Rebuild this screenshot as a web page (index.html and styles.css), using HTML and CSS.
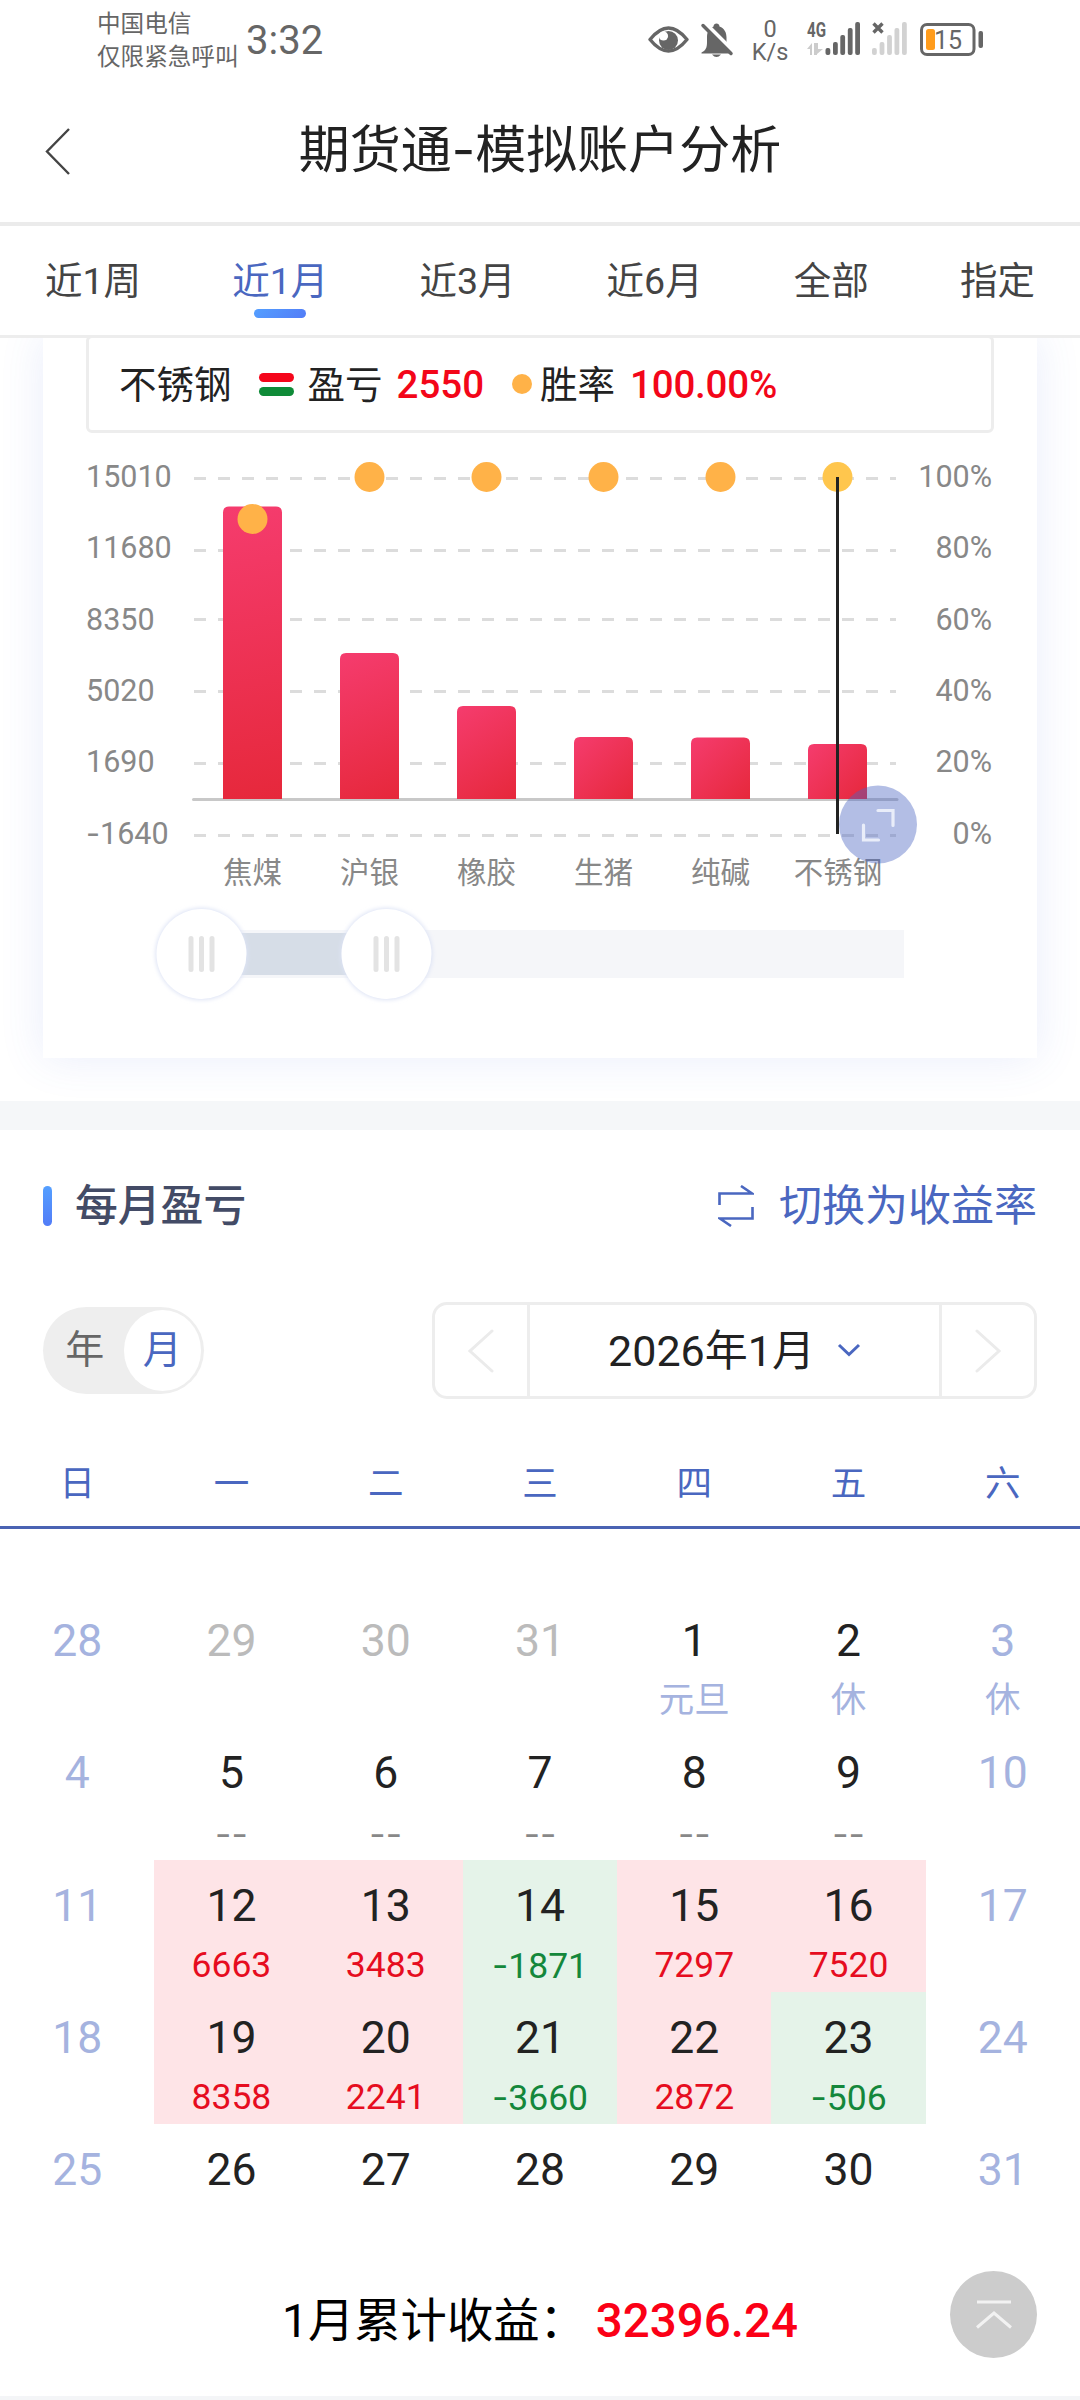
FILE: index.html
```html
<!DOCTYPE html>
<html lang="zh-CN">
<head>
    <meta charset="UTF-8">
    <meta name="viewport" content="width=device-width, initial-scale=1.0">
    <title>期货通-模拟账户分析</title>
    <link rel="stylesheet" href="styles.css">
</head>
<body>

    <!-- status bar -->
    <div class="status-bar">
        <div class="carrier">
            <div>中国电信</div>
            <div>仅限紧急呼叫</div>
        </div>
        <div class="clock">3:32</div>
        <svg class="status-icons" width="340" height="80" viewBox="648 0 340 80">
            <path d="M650 39.5Q668.500 16.500 687 39.500Q668.500 62.500 650 39.500Z" fill="none" stroke="#666" stroke-width="3.4" stroke-linejoin="round"/>
            <circle cx="668.500" cy="40.500" r="9.500" fill="#666"/>
            <circle cx="663.500" cy="36" r="4.600" fill="#fff"/>
            <path d="M704 51c2-2 3-4 3-9v-5c0-6 3-9 6.500-10.500c0-4 6-4 6 0c5 2 7 6 7 11v5c0 5 1 6 4 9v2h-29v-1z" fill="#666"/>
            <path d="M712 54.500h9q-4.500 5-9 0z" fill="#666"/>
            <path d="M705.500 23.500L735 53" stroke="#fff" stroke-width="4"/>
            <path d="M703 25.500L731 53.500" stroke="#666" stroke-width="3.500" stroke-linecap="round"/>
            <text x="770" y="37" class="net-speed">0</text>
            <text x="770" y="60" class="net-speed">K/s</text>
            <text x="807" y="37" class="net-type" textLength="19" lengthAdjust="spacingAndGlyphs">4G</text>
            <path d="M807 49l5-6v12h-2v-6zM814 43v12l3 0v-1l6-5h-5v-6z" fill="#ccc"/>
            <g fill="#666">
                <rect x="825.500" y="48" width="4.800" height="7" rx="2"/>
                <rect x="833" y="42" width="4.800" height="13" rx="2"/>
                <rect x="840.300" y="35" width="4.800" height="20" rx="2"/>
                <rect x="847.800" y="28" width="4.800" height="27" rx="2"/>
                <rect x="855.200" y="22" width="4.800" height="33" rx="2"/>
            </g>
            <path d="M873.500 23.500l9 9M882.500 23.500l-9 9" stroke="#666" stroke-width="3.400"/>
            <g fill="#d2d2d2">
                <rect x="872" y="48" width="4.800" height="7" rx="2"/>
                <rect x="879.600" y="42" width="4.800" height="13" rx="2"/>
                <rect x="887.100" y="35" width="4.800" height="20" rx="2"/>
                <rect x="894.500" y="28" width="4.800" height="27" rx="2"/>
                <rect x="902" y="22" width="4.800" height="33" rx="2"/>
            </g>
            <rect x="921.500" y="24.500" width="52.500" height="30" rx="5.500" fill="none" stroke="#666" stroke-width="3"/>
            <rect x="926" y="29" width="9" height="21" rx="2.500" fill="#ff9c1c"/>
            <text x="948" y="49" class="battery-text">15</text>
            <rect x="978.500" y="31" width="4.500" height="17" rx="2" fill="#666"/>
        </svg>
    </div>

    <header class="nav-bar">
        <svg class="back" width="26" height="48" viewBox="0 0 26 48"><path d="M24 1L2 23.500L24 46" fill="none" stroke="#444" stroke-width="2.400"/></svg>
        <h1>期货通<span class="dash">-</span>模拟账户分析</h1>
    </header>

    <nav class="tabs">
        <span class="tab">近1周</span>
        <span class="tab active">近1月</span>
        <span class="tab">近3月</span>
        <span class="tab">近6月</span>
        <span class="tab">全部</span>
        <span class="tab">指定</span>
    </nav>

    <section class="chart-section">
        <div class="card">
            <div class="legend">
                <span>不锈钢</span>
                <span class="legend-lines"><i class="line-red"></i><i class="line-green"></i></span>
                <span>盈亏</span>
                <b class="profit">2550</b>
                <i class="legend-dot"></i>
                <span>胜率</span>
                <b class="rate">100.00%</b>
            </div>

            <svg class="chart" width="994" height="625" viewBox="43 433 994 625">
                <defs>
                    <linearGradient id="barFill" gradientUnits="userSpaceOnUse">
                        <stop offset="0" stop-color="#f53c6e"/>
                        <stop offset="1" stop-color="#e6283b"/>
                    </linearGradient>
                    <linearGradient id="bar1" href="#barFill" x1="223" y1="507" x2="282" y2="799"/>
                    <linearGradient id="bar2" href="#barFill" x1="340" y1="653" x2="399" y2="799"/>
                    <linearGradient id="bar3" href="#barFill" x1="457" y1="706" x2="516" y2="799"/>
                    <linearGradient id="bar4" href="#barFill" x1="574" y1="737" x2="633" y2="799"/>
                    <linearGradient id="bar5" href="#barFill" x1="691" y1="737" x2="750" y2="799"/>
                    <linearGradient id="bar6" href="#barFill" x1="808" y1="744" x2="867" y2="799"/>
                    <filter id="soft" x="-20%" y="-20%" width="140%" height="140%"><feGaussianBlur stdDeviation="2"/></filter>
                </defs>

                <!-- grid -->
                <g class="grid">
                    <path d="M194 478.500H896"/>
                    <path d="M194 550.500H896"/>
                    <path d="M194 619.500H896"/>
                    <path d="M194 691.500H896"/>
                    <path d="M194 763.500H896"/>
                    <path d="M194 835.500H896"/>
                </g>
                <path class="axis" d="M193.500 799.500H897"/>

                <g class="label">
                    <text x="86" y="487">15010</text>
                    <text x="86" y="558">11680</text>
                    <text x="86" y="630">8350</text>
                    <text x="86" y="701">5020</text>
                    <text x="86" y="772">1690</text>
                    <text x="86" y="844"><tspan class="dash">-</tspan>1640</text>
                </g>
                <g class="label right">
                    <text x="992" y="487">100%</text>
                    <text x="992" y="558">80%</text>
                    <text x="992" y="630">60%</text>
                    <text x="992" y="701">40%</text>
                    <text x="992" y="772">20%</text>
                    <text x="992" y="844">0%</text>
                </g>

                <!-- bars -->
                <path fill="url(#bar1)" d="M223 799V512.500q0-6 6-6h47q6 0 6 6V799z"/>
                <path fill="url(#bar2)" d="M340 799V659q0-6 6-6h47q6 0 6 6V799z"/>
                <path fill="url(#bar3)" d="M457 799V712q0-6 6-6h47q6 0 6 6V799z"/>
                <path fill="url(#bar4)" d="M574 799V743q0-6 6-6h47q6 0 6 6V799z"/>
                <path fill="url(#bar5)" d="M691 799V743.500q0-6 6-6h47q6 0 6 6V799z"/>
                <path fill="url(#bar6)" d="M808 799V750q0-6 6-6h47q6 0 6 6V799z"/>

                <g fill="#ffb248">
                    <circle cx="252.500" cy="519" r="15"/>
                    <circle cx="369.500" cy="477" r="15"/>
                    <circle cx="486.500" cy="477" r="15"/>
                    <circle cx="603.500" cy="477" r="15"/>
                    <circle cx="720.500" cy="477" r="15"/>
                    <circle cx="837.500" cy="477" r="15" fill="#ffc64d"/>
                </g>
                <path d="M837.500 477V834" stroke="#222" stroke-width="3"/>

                <g class="label names">
                    <text x="252.500" y="882.500">焦煤</text>
                    <text x="369.500" y="882.500">沪银</text>
                    <text x="486.500" y="882.500">橡胶</text>
                    <text x="603.500" y="882.500">生猪</text>
                    <text x="720.500" y="882.500">纯碱</text>
                    <text x="838" y="882.500">不锈钢</text>
                </g>

                <!-- zoom slider -->
                <rect x="201" y="930" width="703" height="48" fill="#f5f6f9"/>
                <rect x="201" y="933" width="186" height="42" fill="#d6dde7"/>
                <g>
                    <circle cx="201.500" cy="954" r="46" fill="#dde3f5" filter="url(#soft)"/>
                    <circle cx="201.500" cy="954" r="45" fill="#fff"/>
                    <path d="M191 938.500v31M201.500 938.500v31M212 938.500v31" stroke="#e3e3e3" stroke-width="5" stroke-linecap="round"/>
                </g>
                <g>
                    <circle cx="386.500" cy="954" r="46" fill="#dde3f5" filter="url(#soft)"/>
                    <circle cx="386.500" cy="954" r="45" fill="#fff"/>
                    <path d="M376 938.500v31M386.500 938.500v31M397 938.500v31" stroke="#e3e3e3" stroke-width="5" stroke-linecap="round"/>
                </g>

                <!-- fullscreen button -->
                <circle cx="878" cy="824.500" r="39" fill="#4a65c0" fill-opacity=".42"/>
                <path d="M878 810.500h15v15M863.500 825v15h15" fill="none" stroke="#e9edf9" stroke-width="3.200" stroke-linecap="round"/>
            </svg>
        </div>
    </section>

    <section class="monthly">
        <div class="section-head">
            <h2><span>每月盈亏</span></h2>
            <div class="switch">
                <svg width="36" height="42" viewBox="0 0 36 42"><path d="M1.500 20V8.500H34L23 1M34.500 22V33.500H2L13 41" fill="none" stroke="#4a67c0" stroke-width="2.600"/></svg>
                <span>切换为收益率</span>
            </div>
        </div>

        <div class="controls">
            <div class="toggle">
                <span>年</span>
                <span class="on">月</span>
            </div>
            <div class="picker">
                <div class="arrow"><svg width="26" height="44" viewBox="0 0 26 44"><path d="M24 2L2 22L24 42" fill="none" stroke="#ebebeb" stroke-width="3" stroke-linecap="round"/></svg></div>
                <div class="current">
                    <span>2026年1月</span>
                    <svg width="24" height="16" viewBox="0 0 24 16"><path d="M2 2L12 11.500L22 2" fill="none" stroke="#4a67c0" stroke-width="3"/></svg>
                </div>
                <div class="arrow"><svg width="26" height="44" viewBox="0 0 26 44"><path d="M2 2L24 22L2 42" fill="none" stroke="#ebebeb" stroke-width="3" stroke-linecap="round"/></svg></div>
            </div>
        </div>

        <div class="week">
            <span>日</span><span>一</span><span>二</span><span>三</span><span>四</span><span>五</span><span>六</span>
        </div>

        <div class="calendar">
            <div class="day weekend">28</div>
            <div class="day other">29</div>
            <div class="day other">30</div>
            <div class="day other">31</div>
            <div class="day">1<small class="holiday">元旦</small></div>
            <div class="day">2<small class="holiday">休</small></div>
            <div class="day weekend">3<small class="holiday">休</small></div>

            <div class="day weekend">4</div>
            <div class="day">5<small class="dash">--</small></div>
            <div class="day">6<small class="dash">--</small></div>
            <div class="day">7<small class="dash">--</small></div>
            <div class="day">8<small class="dash">--</small></div>
            <div class="day">9<small class="dash">--</small></div>
            <div class="day weekend">10</div>

            <div class="day weekend">11</div>
            <div class="day up">12<small>6663</small></div>
            <div class="day up">13<small>3483</small></div>
            <div class="day down">14<small><span class="dash">-</span>1871</small></div>
            <div class="day up">15<small>7297</small></div>
            <div class="day up">16<small>7520</small></div>
            <div class="day weekend">17</div>

            <div class="day weekend">18</div>
            <div class="day up">19<small>8358</small></div>
            <div class="day up">20<small>2241</small></div>
            <div class="day down">21<small><span class="dash">-</span>3660</small></div>
            <div class="day up">22<small>2872</small></div>
            <div class="day down">23<small><span class="dash">-</span>506</small></div>
            <div class="day weekend">24</div>

            <div class="day weekend">25</div>
            <div class="day">26</div>
            <div class="day">27</div>
            <div class="day">28</div>
            <div class="day">29</div>
            <div class="day">30</div>
            <div class="day weekend">31</div>
        </div>

        <div class="total">
            <span>1月累计收益：</span>
            <b>32396.24</b>
        </div>
    </section>

    <div class="to-top">
        <svg width="40" height="30" viewBox="0 0 40 30"><path d="M3 2H37M3 27.500L20 13L37 27.500" fill="none" stroke="#f2f2f2" stroke-width="3"/></svg>
    </div>

</body>
</html>
```

FILE: styles.css
```css
* {
    box-sizing: border-box;
}

body {
    margin: 0;
    height: 2400px;
    display: flex;
    flex-direction: column;
    position: relative;
    overflow: hidden;
    background-color: #f4f5f7;
    color: #222;
    font-family: Roboto, 'Noto Sans CJK SC', sans-serif;
}

h1, h2 {
    margin: 0;
    font-weight: 400;
}

.dash {
    font-family: Inter, sans-serif;
}

/* status bar */
.status-bar {
    height: 80px;
    flex: none;
    display: flex;
    padding-left: 97px;
    background: #fff;
    color: #666;
}

.carrier {
    width: 149px;
    padding-top: 8px;
    font-size: 23.6px;
    line-height: 33px;
    white-space: nowrap;
}

.clock {
    width: 402px;
    font-size: 40px;
    line-height: 82px;
}

.net-speed {
    font-size: 23.500px;
    text-anchor: middle;
    fill: #666;
}

.net-type {
    font-size: 20px;
    font-weight: 700;
    fill: #666;
}

.battery-text {
    font-size: 25px;
    text-anchor: middle;
    fill: #666;
}

/* title */
.nav-bar {
    height: 146px;
    flex: none;
    display: flex;
    align-items: center;
    padding: 0 45px 2px;
    background: #fff;
    border-bottom: 4px solid #ebebeb;
}

.nav-bar .back {
    margin-top: 4px;
}

.nav-bar h1 {
    flex: 1;
    padding-right: 26px;
    text-align: center;
    font-size: 51px;
    line-height: 70px;
}

.tabs {
    height: 112px;
    flex: none;
    display: flex;
    justify-content: space-between;
    padding: 0 45px;
    background: #fff;
    border-bottom: 3px solid #ededed;
    color: #444;
    font-size: 37.500px;
    line-height: 110px;
}

.tab.active {
    color: #4a67c0;
    display: flex;
    flex-direction: column;
    align-items: center;
}

.tab.active::after {
    content: '';
    width: 52px;
    height: 9px;
    margin-top: -27px;
    border-radius: 5px;
    background: linear-gradient(135deg, #549fff, #527cf7);
}

/* chart card */
.chart-section {
    height: 763px;
    flex: none;
    padding: 0 43px 43px;
    background: #fff;
    overflow: hidden;
}

.card {
    height: 723px;
    background: #fff;
    box-shadow: 0 0 42px rgba(75, 103, 220, .12);
}

.legend {
    height: 98px;
    margin: -3px 43px 0;
    padding-left: 30px;
    display: flex;
    align-items: center;
    border: 3px solid #ededed;
    border-radius: 6px;
    font-size: 37.500px;
}

.legend span {
    margin-bottom: 5px;
}

.legend b {
    font-weight: 500;
    color: #f30619;
    font-size: 38.500px;
}

.legend .legend-lines {
    width: 35px;
    margin: 0 14px 0 27px;
    display: flex;
    flex-direction: column;
    gap: 5px;
}

.legend-lines i {
    height: 9px;
    border-radius: 5px;
}

.line-red {
    background: #f5061b;
}

.line-green {
    background: #0f8b38;
}

.profit {
    margin: 0 28px 0 14px;
}

.legend-dot {
    width: 20px;
    height: 20px;
    margin-right: 8px;
    border-radius: 50%;
    background: #ffb248;
}

.rate {
    margin-left: 15px;
    letter-spacing: -.2px;
}

.chart {
    display: block;
}

.grid path {
    stroke: #dcdcdc;
    stroke-width: 3;
    stroke-dasharray: 12 12;
}

.axis {
    stroke: #c8c8c8;
    stroke-width: 3;
    stroke-linecap: round;
}

.label {
    font-size: 30.500px;
    fill: #888;
}

.label.right {
    text-anchor: end;
}

.label.names {
    font-size: 29.500px;
    text-anchor: middle;
}

/* monthly profit */
.monthly {
    height: 1295px;
    flex: none;
    border-top: 29px solid #f5f7f9;
    background: #fff;
}

.section-head {
    height: 152px;
    padding: 0 43px;
    display: flex;
    justify-content: space-between;
    align-items: center;
    font-size: 43px;
}

.section-head span {
    margin-bottom: 8px;
}

.section-head h2 {
    display: flex;
    align-items: center;
    gap: 23px;
    font-size: 42.800px;
    font-weight: 500;
    color: #434b66;
}

.section-head h2::before {
    content: '';
    width: 9px;
    height: 40px;
    border-radius: 5px;
    background: linear-gradient(#549fff, #527cf7);
}

.switch {
    display: flex;
    align-items: center;
    gap: 25px;
    color: #4a67c0;
}

.controls {
    height: 137px;
    padding: 20px 43px 20px;
    display: flex;
    justify-content: space-between;
    align-items: center;
}

.toggle {
    width: 161px;
    height: 87px;
    padding: 3px;
    display: flex;
    border-radius: 44px;
    background: #eee;
    color: #666;
    font-size: 39px;
    line-height: 80px;
    text-align: center;
}

.toggle span {
    flex: 1;
}

.toggle .on {
    border-radius: 50%;
    background: #fff;
    color: #4a67c0;
}

.picker {
    width: 605px;
    height: 97px;
    display: flex;
    border: 3px solid #ededed;
    border-radius: 15px;
}

.picker .arrow {
    width: 92px;
    display: flex;
    align-items: center;
    justify-content: center;
}

.picker .current {
    flex: 1;
    display: flex;
    align-items: center;
    justify-content: center;
    gap: 22px;
    border-left: 3px solid #ededed;
    border-right: 3px solid #ededed;
    font-size: 43px;
}

.current span {
    margin-bottom: 8px;
}

.week {
    height: 110px;
    display: flex;
    border-bottom: 3px solid #4a63b3;
    color: #4a67c0;
    font-size: 35.500px;
    line-height: 131px;
    text-align: center;
}

.week span {
    flex: 1;
}

.calendar {
    padding-top: 66px;
    display: grid;
    grid-template-columns: repeat(7, 1fr);
    grid-auto-rows: 132.300px;
}

.day {
    padding-top: 16px;
    text-align: center;
    font-size: 44.500px;
    line-height: 60px;
}

.day small {
    display: block;
    font-size: 35.500px;
    line-height: 59px;
}

.weekend,
.day .holiday {
    color: #a5b3df;
}

.other {
    color: #bbb;
}

.day > .dash {
    color: #888;
    line-height: 64px;
}

.up {
    background: #fee4e7;
}

.up small {
    color: #e60c20;
}

.down {
    background: #e5f3e9;
}

.down small {
    color: #14873b;
}

.total {
    height: 120px;
    display: flex;
    align-items: center;
    justify-content: center;
    gap: 10px;
    color: #000;
    font-size: 46.300px;
}

.total b {
    margin-top: 9px;
    font-weight: 500;
    font-size: 47.500px;
    color: #fb0016;
}

.to-top {
    position: absolute;
    left: 950px;
    top: 2271px;
    width: 87px;
    height: 87px;
    display: flex;
    align-items: center;
    justify-content: center;
    border-radius: 50%;
    background: #ccc;
}
```
